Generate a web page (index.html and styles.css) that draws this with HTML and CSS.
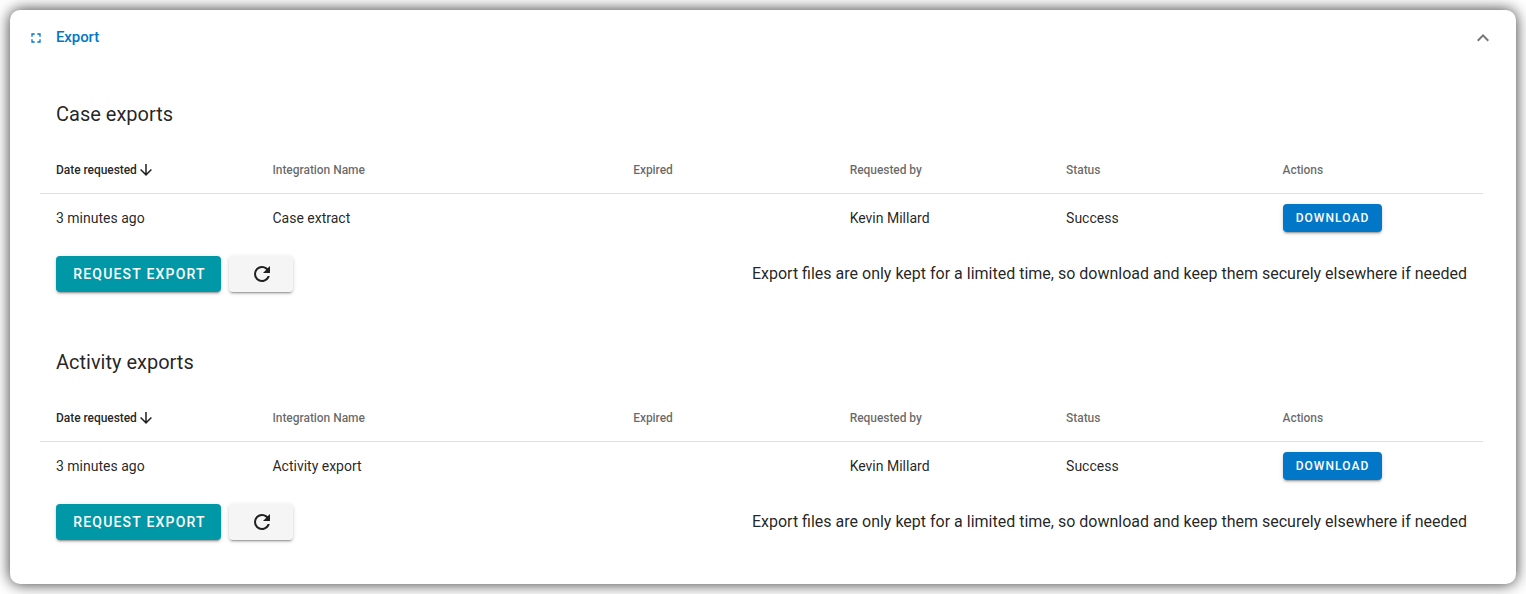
FILE: index.html
```html
<!DOCTYPE html>
<html lang="en">
<head>
    <meta charset="UTF-8">
    <meta name="viewport" content="width=device-width, initial-scale=1.0">
    <title>Export</title>
    <link rel="stylesheet" href="styles.css">
</head>
<body>

<div class="card">
    <div class="card-header">
        <svg class="icon-expand" viewBox="0 0 24 24"><path d="M5,5H10V7H7V10H5V5M14,5H19V10H17V7H14V5M17,14H19V19H14V17H17V14M10,17V19H5V14H7V17H10Z"/></svg>
        <h1>Export</h1>
        <svg class="icon-collapse" viewBox="0 0 24 24"><path d="M7.41,15.41L12,10.83L16.59,15.41L18,14L12,8L6,14L7.41,15.41Z"/></svg>
    </div>

    <!-- Case exports -->
    <section>
        <h2>Case exports</h2>
        <table>
            <thead>
                <tr>
                    <th class="sorted">Date requested<svg class="icon-sort" viewBox="0 0 24 24"><path d="M11,4H13V16L18.5,10.5L19.92,11.92L12,19.84L4.08,11.92L5.5,10.5L11,16V4Z"/></svg></th>
                    <th class="wide">Integration Name</th>
                    <th>Expired</th>
                    <th>Requested by</th>
                    <th>Status</th>
                    <th>Actions</th>
                </tr>
            </thead>
            <tbody>
                <tr>
                    <td>3 minutes ago</td>
                    <td>Case extract</td>
                    <td></td>
                    <td>Kevin Millard</td>
                    <td>Success</td>
                    <td><button class="btn btn-small">Download</button></td>
                </tr>
            </tbody>
        </table>
        <div class="actions">
            <button class="btn btn-request">Request export</button>
            <button class="btn btn-refresh" aria-label="Refresh">
                <svg viewBox="0 0 24 24"><path d="M17.65,6.35C16.2,4.9 14.21,4 12,4A8,8 0 0,0 4,12A8,8 0 0,0 12,20C15.73,20 18.84,17.45 19.73,14H17.65C16.83,16.33 14.61,18 12,18A6,6 0 0,1 6,12A6,6 0 0,1 12,6C13.66,6 15.14,6.69 16.22,7.78L13,11H20V4L17.65,6.35Z"/></svg>
            </button>
            <p>Export files are only kept for a limited time, so download and keep them securely elsewhere if needed</p>
        </div>
    </section>

    <!-- Activity exports -->
    <section>
        <h2>Activity exports</h2>
        <table>
            <thead>
                <tr>
                    <th class="sorted">Date requested<svg class="icon-sort" viewBox="0 0 24 24"><path d="M11,4H13V16L18.5,10.5L19.92,11.92L12,19.84L4.08,11.92L5.5,10.5L11,16V4Z"/></svg></th>
                    <th class="wide">Integration Name</th>
                    <th>Expired</th>
                    <th>Requested by</th>
                    <th>Status</th>
                    <th>Actions</th>
                </tr>
            </thead>
            <tbody>
                <tr>
                    <td>3 minutes ago</td>
                    <td>Activity export</td>
                    <td></td>
                    <td>Kevin Millard</td>
                    <td>Success</td>
                    <td><button class="btn btn-small">Download</button></td>
                </tr>
            </tbody>
        </table>
        <div class="actions">
            <button class="btn btn-request">Request export</button>
            <button class="btn btn-refresh" aria-label="Refresh">
                <svg viewBox="0 0 24 24"><path d="M17.65,6.35C16.2,4.9 14.21,4 12,4A8,8 0 0,0 4,12A8,8 0 0,0 12,20C15.73,20 18.84,17.45 19.73,14H17.65C16.83,16.33 14.61,18 12,18A6,6 0 0,1 6,12A6,6 0 0,1 12,6C13.66,6 15.14,6.69 16.22,7.78L13,11H20V4L17.65,6.35Z"/></svg>
            </button>
            <p>Export files are only kept for a limited time, so download and keep them securely elsewhere if needed</p>
        </div>
    </section>
</div>

</body>
</html>
```
FILE: styles.css
```css
* {
    box-sizing: border-box;
}
body {
    font-family: Roboto, Arial, sans-serif;
    margin: 0;
    padding: 10px;
    background: #fff;
    color: rgba(0, 0, 0, 0.87);
    overflow: hidden;
}
svg {
    fill: currentColor;
    flex-shrink: 0;
}
.card {
    height: 574px;
    padding: 0 33px 0 30px;
    border-radius: 10px;
    background-color: #fff;
    box-shadow: 0 0 15px rgba(0, 0, 0, 0.8);
}
.card-header {
    display: flex;
    align-items: center;
    height: 56px;
    margin: 0 -12px 0 -12px;
    color: #0277c8;
}
.card-header h1 {
    flex: 1;
    margin: 0 0 2px 12px;
    font-size: 15px;
    font-weight: 500;
    line-height: 24px;
    letter-spacing: -0.1px;
}
.icon-expand {
    width: 16px;
    height: 16px;
}
.icon-collapse {
    width: 24px;
    height: 24px;
    color: rgba(0, 0, 0, 0.54);
}

/* Export sections */
section {
    height: 248px;
    padding-top: 32px;
}
h2 {
    margin: 0 16px 16px;
    font-size: 20px;
    font-weight: 400;
    line-height: 32px;
}
table {
    width: 100%;
    table-layout: fixed;
    border-collapse: separate;
    border-spacing: 0;
}
th, td {
    width: 15%;
    height: 48px;
    padding: 0 16px;
    text-align: left;
    white-space: nowrap;
}
th {
    border-bottom: 1px solid rgba(0, 0, 0, 0.12);
    font-size: 12px;
    font-weight: 500;
    letter-spacing: -0.05px;
    color: rgba(0, 0, 0, 0.6);
}
th.wide {
    width: 25%;
}
th.sorted {
    color: rgba(0, 0, 0, 0.87);
}
td {
    font-size: 14px;
}
.icon-sort {
    width: 18px;
    height: 18px;
    margin: -4px 0;
    vertical-align: -1px;
}

/* Buttons */
.btn {
    display: inline-flex;
    align-items: center;
    justify-content: center;
    height: 36px;
    padding: 0 16px;
    border: none;
    border-radius: 4px;
    font-family: inherit;
    font-size: 14px;
    font-weight: 500;
    letter-spacing: 1.25px;
    text-transform: uppercase;
    white-space: nowrap;
    color: #fff;
    cursor: pointer;
    box-shadow: 0 3px 1px -2px rgba(0, 0, 0, 0.2), 0 2px 2px 0 rgba(0, 0, 0, 0.14), 0 1px 5px 0 rgba(0, 0, 0, 0.12);
}
.btn-small {
    width: 99px;
    height: 28px;
    padding: 0 0 0 1px;
    font-size: 12px;
    letter-spacing: 1.07px;
    vertical-align: middle;
    background-color: #0277c8;
}
.btn-request {
    width: 165px;
    padding: 0 0 0 2px;
    letter-spacing: 1.2px;
    background-color: #0097a7;
}
.btn-refresh {
    width: 64.4px;
    margin-left: 8px;
    padding: 0 0 0 1px;
    color: rgba(0, 0, 0, 0.87);
    background-color: #f5f5f5;
}
.btn-refresh svg {
    width: 24px;
    height: 24px;
}
.actions {
    display: flex;
    align-items: center;
    padding: 14px 16px 0;
}
.actions p {
    margin: 0 0 0 auto;
    font-size: 16px;
    line-height: 24px;
}
```
